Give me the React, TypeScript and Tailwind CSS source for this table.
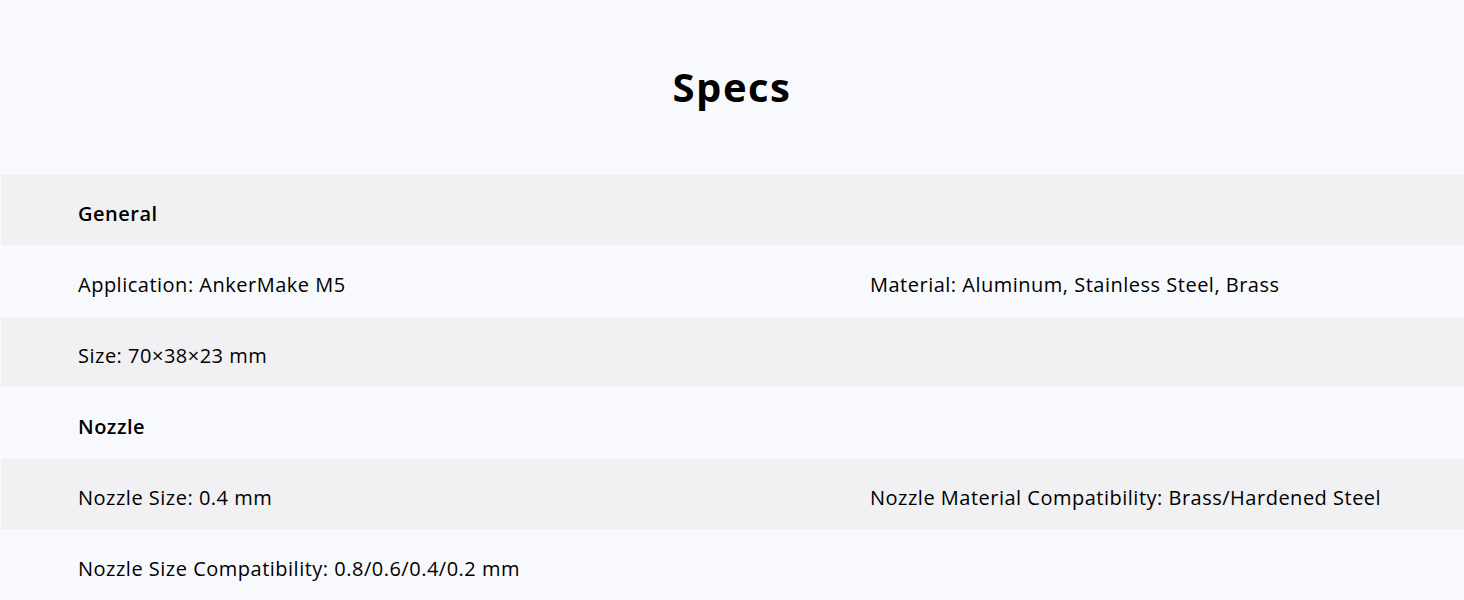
const rows: { left: string; right?: string; bold?: boolean }[] = [
  { left: "General", bold: true },
  { left: "Application: AnkerMake M5", right: "Material: Aluminum, Stainless Steel, Brass" },
  { left: "Size: 70×38×23 mm" },
  { left: "Nozzle", bold: true },
  { left: "Nozzle Size: 0.4 mm", right: "Nozzle Material Compatibility: Brass/Hardened Steel" },
  { left: "Nozzle Size Compatibility: 0.8/0.6/0.4/0.2 mm" },
]

export default function App() {
  return (
    <div
      className="min-h-[600px] w-full bg-[#f8f9fd] text-black"
      style={{ fontFamily: '"Open Sans", "Liberation Sans", sans-serif' }}
    >
      <h2 className="flex h-[175px] items-center justify-center pb-[2px] text-[40px] font-bold tracking-[1.5px]">
        Specs
      </h2>

      <div className="pl-px">
        {rows.map((row, i) => (
          <div
            key={i}
            className={
              i % 2 === 0
                ? "grid h-[70px] grid-cols-[792px_1fr] items-center bg-[#f1f1f3] pl-[77px] pt-2"
                : "grid h-[72px] grid-cols-[792px_1fr] items-center pl-[77px] pt-2"
            }
          >
            <span
              className={
                row.bold
                  ? "text-[20px] font-semibold tracking-[0.5px]"
                  : "text-[20px] tracking-[0.5px]"
              }
            >
              {row.left}
            </span>
            {row.right && (
              <span className="text-[20px] tracking-[0.5px]">{row.right}</span>
            )}
          </div>
        ))}
      </div>
    </div>
  )
}
